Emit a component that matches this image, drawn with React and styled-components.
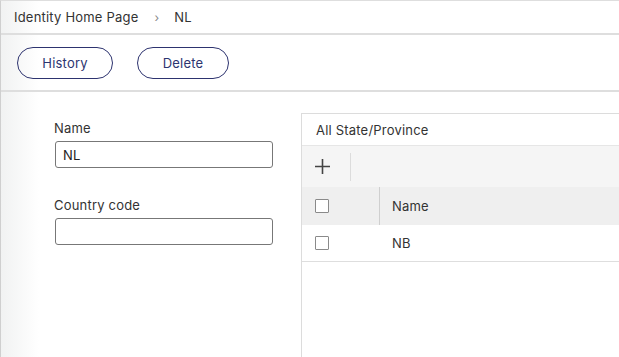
import styled, { createGlobalStyle } from "styled-components"

const GlobalStyle = createGlobalStyle`
    html, body {
        margin: 0;
        padding: 0;
        background: #fff;
    }
    body {
        font-family: Inter, "Liberation Sans", sans-serif;
        font-size: 13px;
        letter-spacing: 0.2px;
        color: #333;
    }
`

//Styled components
const Page = styled.div`
    width: 619px;
    height: 357px;
    display: flex;
    flex-direction: column;
    box-sizing: border-box;
    border-top: 1px solid #dedede;
    border-left: 1px solid #cfcfcf;
    background: linear-gradient(to right, #f1f2f2 0px, #ffffff 38px);
    overflow: hidden;
`

const Breadcrumb = styled.div`
    height: 32px;
    display: flex;
    align-items: center;
    padding-left: 13px;
    border-bottom: 2px solid #dedede;
    flex-shrink: 0;
`

const Crumb = styled.span`
    color: #333;
`

const Chevron = styled.span`
    margin: 0 15px 0 16px;
    color: #888;
    font-size: 12px;
`

const Toolbar = styled.div`
    height: 55px;
    display: flex;
    align-items: center;
    gap: 24px;
    padding-left: 16px;
    border-bottom: 2px solid #dedede;
    flex-shrink: 0;
`

const PillButton = styled.button`
    width: ${props => props.width}px;
    height: 32px;
    border: 1px solid #2d336f;
    border-radius: 16px;
    background: transparent;
    color: #2c3570;
    font-family: inherit;
    font-size: 13px;
    letter-spacing: 0.2px;
    cursor: pointer;
    padding: 0;
`

const Body = styled.div`
    flex: 1;
    display: flex;
`

const Form = styled.div`
    width: 247px;
    padding: 28px 0 0 53px;
    display: flex;
    flex-direction: column;
`

const Field = styled.div`
    display: flex;
    flex-direction: column;
    margin-bottom: 29px;
`

const Label = styled.label`
    font-size: 13px;
    line-height: 16px;
    color: #333;
    margin-bottom: 5px;
`

const Input = styled.input`
    width: 218px;
    height: 27px;
    box-sizing: border-box;
    border: 1px solid #777;
    border-radius: 3px;
    padding: 0 7px;
    font-family: inherit;
    font-size: 13px;
    letter-spacing: 0.2px;
    color: #222;
    background: #fff;
    margin-left: 1px;
`

const Panel = styled.div`
    flex: 1;
    margin-top: 21px;
    border-left: 1px solid #dcdcdc;
    border-top: 1px solid #dcdcdc;
    background: #fff;
    display: flex;
    flex-direction: column;
`

const PanelTitle = styled.div`
    height: 31px;
    display: flex;
    align-items: center;
    padding-left: 14px;
    color: #333;
    border-bottom: 1px solid #e6e6e6;
`

const ActionBar = styled.div`
    height: 41px;
    display: flex;
    align-items: center;
    background: #f5f5f5;
    padding-left: 10px;
`

const IconButton = styled.div`
    width: 20px;
    height: 20px;
    display: flex;
    align-items: center;
    justify-content: center;
    color: #444;
`

const BarDivider = styled.div`
    width: 1px;
    height: 28px;
    background: #dcdcdc;
    margin-left: 18px;
`

const Row = styled.div`
    height: ${props => props.height}px;
    display: flex;
    align-items: center;
    background: ${props => props.head ? "#efefef" : "#fff"};
    border-bottom: ${props => props.head ? "none" : "1px solid #dedede"};
`

const CheckCell = styled.div`
    width: 78px;
    height: 100%;
    display: flex;
    align-items: center;
    padding-left: 13px;
    box-sizing: border-box;
    border-right: 1px solid ${props => props.head ? "#cfcfcf" : "transparent"};
`

const Checkbox = styled.div`
    width: 14px;
    height: 14px;
    box-sizing: border-box;
    border: 1px solid #8a8a8a;
    border-radius: 1px;
    background: #fff;
`

const Cell = styled.div`
    padding-left: 12px;
    color: #333;
`

const PlusIcon = () => (
    <svg width="17" height="17" viewBox="0 0 17 17">
        <path d="M8.5 1v15M1 8.5h15" stroke="#444" strokeWidth="1.6" />
    </svg>
)

const App = () => {
    return (
        <>
            <GlobalStyle />
            <Page>
                <Breadcrumb>
                    <Crumb>Identity Home Page</Crumb>
                    <Chevron>›</Chevron>
                    <Crumb>NL</Crumb>
                </Breadcrumb>
                <Toolbar>
                    <PillButton width={96}>History</PillButton>
                    <PillButton width={92}>Delete</PillButton>
                </Toolbar>
                <Body>
                    <Form>
                        <Field>
                            <Label>Name</Label>
                            <Input defaultValue="NL" />
                        </Field>
                        <Field>
                            <Label>Country code</Label>
                            <Input defaultValue="" />
                        </Field>
                    </Form>
                    <Panel>
                        <PanelTitle>All State/Province</PanelTitle>
                        <ActionBar>
                            <IconButton>
                                <PlusIcon />
                            </IconButton>
                            <BarDivider />
                        </ActionBar>
                        <Row head height={38}>
                            <CheckCell head>
                                <Checkbox />
                            </CheckCell>
                            <Cell>Name</Cell>
                        </Row>
                        <Row height={36}>
                            <CheckCell>
                                <Checkbox />
                            </CheckCell>
                            <Cell>NB</Cell>
                        </Row>
                    </Panel>
                </Body>
            </Page>
        </>
    )
}

export default App
